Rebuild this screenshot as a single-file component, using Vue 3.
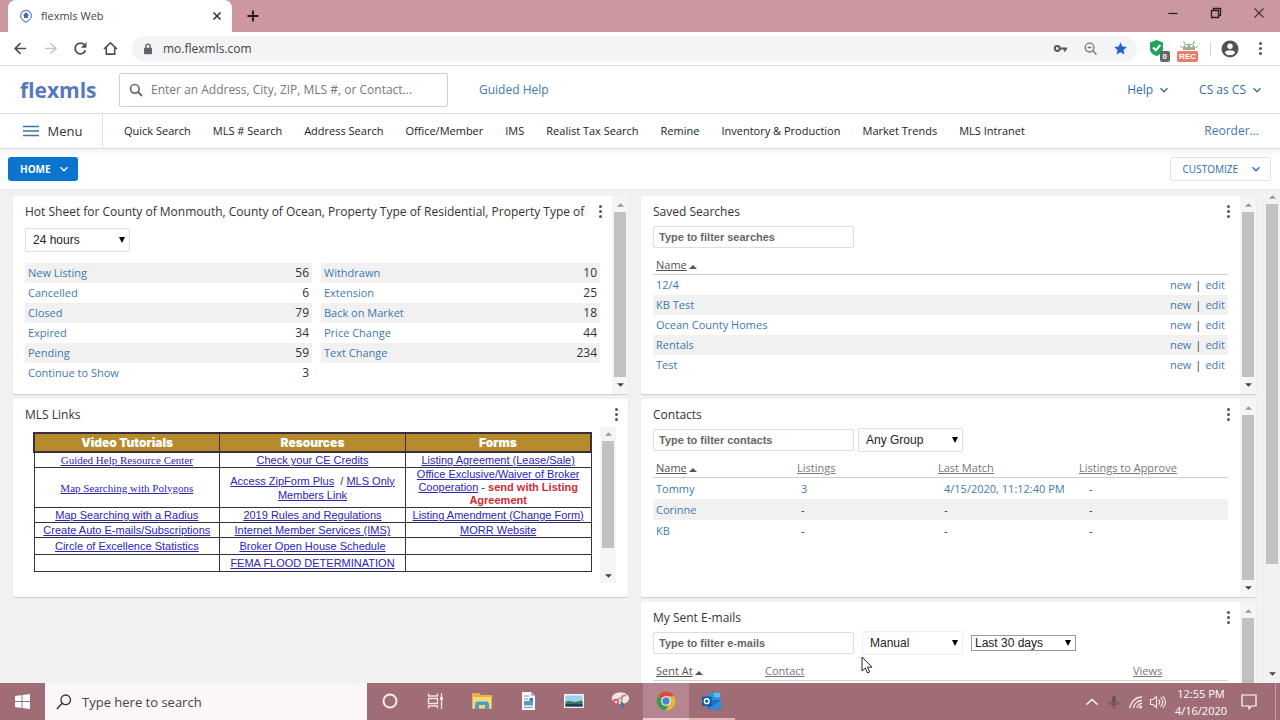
<script setup>
import { ref } from 'vue'

const navItems = [
  'Quick Search', 'MLS # Search', 'Address Search', 'Office/Member', 'IMS',
  'Realist Tax Search', 'Remine', 'Inventory & Production', 'Market Trends', 'MLS Intranet'
]
const hotLeft = [
  ['New Listing', 56], ['Cancelled', 6], ['Closed', 79],
  ['Expired', 34], ['Pending', 59], ['Continue to Show', 3]
]
const hotRight = [
  ['Withdrawn', 10], ['Extension', 25], ['Back on Market', 18],
  ['Price Change', 44], ['Text Change', 234]
]
const searches = ['12/4', 'KB Test', 'Ocean County Homes', 'Rentals', 'Test']
const contacts = [
  { name: 'Tommy', listings: '3', match: '4/15/2020, 11:12:40 PM' },
  { name: 'Corinne' },
  { name: 'KB' }
]
const address = ref('mo.flexmls.com')
</script>

<template>
  <div class="screen">
    <header class="titlebar">
      <div class="tab">
        <svg class="favicon" viewBox="0 0 14 14" aria-hidden="true">
          <path d="M7 13.4 4.6 11.6A5.4 5.4 0 1 1 9.4 11.6Z" fill="#fff" stroke="#6d86c0" stroke-width="1.2" />
          <path d="M7 3.2 3.8 6.4h1.3v2.7h3.8V6.4h1.3Z" fill="#3e64ad" />
        </svg>
        <span class="tab-title">flexmls Web</span>
        <button class="tab-close" aria-label="Close tab">
          <svg viewBox="0 0 10 10"><path d="M1.5 1.5l7 7M8.5 1.5l-7 7" stroke="#333" stroke-width="1.6" /></svg>
        </button>
      </div>
      <button class="new-tab" aria-label="New tab">
        <svg viewBox="0 0 12 12"><path d="M6 .5v11M.5 6h11" stroke="#2a1418" stroke-width="1.8" /></svg>
      </button>
      <div class="window-buttons">
        <button aria-label="Minimize"><svg viewBox="0 0 12 12"><path d="M1.500 6.500h9" stroke="#221" stroke-width="1.200" /></svg></button>
        <button aria-label="Restore"><svg viewBox="0 0 12 12"><path d="M1.500 3.500h7v7h-7zM3.500 3.500v-2h7v7h-2" fill="none" stroke="#221" stroke-width="1.300" /></svg></button>
        <button aria-label="Close"><svg viewBox="0 0 12 12"><path d="M1.500 1.500l9 9M10.500 1.500l-9 9" stroke="#433" stroke-width="1.200" /></svg></button>
      </div>
    </header>

    <div class="toolbar">
      <button class="tool" aria-label="Back"><svg viewBox="0 0 16 16"><path d="M14 8H2.500M8 2.300 2.300 8 8 13.700" fill="none" stroke="#4d4f52" stroke-width="1.800" /></svg></button>
      <button class="tool" aria-label="Forward"><svg viewBox="0 0 16 16"><path d="M2 8h11.500M8 2.300 13.700 8 8 13.700" fill="none" stroke="#c3c4c6" stroke-width="1.600" /></svg></button>
      <button class="tool" aria-label="Reload"><svg viewBox="0 0 16 16"><path d="M13.300 10A5.700 5.700 0 1 1 12 4" fill="none" stroke="#4d4f52" stroke-width="1.900" /><path d="M14.300 1.200v5.900H8.400Z" fill="#4d4f52" /></svg></button>
      <button class="tool" aria-label="Home"><svg viewBox="0 0 16 16"><path d="M1 8.500 8 2l7 6.500M3.500 7v7h9V7" fill="none" stroke="#4d4f52" stroke-width="1.700" /></svg></button>
      <div class="omnibox">
        <svg class="lock" viewBox="0 0 10 12" aria-hidden="true"><path d="M2.800 5V3.300a2.200 2.200 0 0 1 4.400 0V5" fill="none" stroke="#5f6368" stroke-width="1.300" /><rect x="1" y="4.800" width="8" height="6.500" rx="1" fill="#5f6368" /></svg>
        <input v-model="address" class="address" aria-label="Address bar" />
        <button class="tool" aria-label="Saved passwords"><svg viewBox="0 0 16 16"><circle cx="4.500" cy="8" r="2.600" fill="none" stroke="#55585c" stroke-width="2.200" /><path d="M7.500 7h7.500v2h-1.200v2.300h-2.300V9h-4Z" fill="#55585c" /></svg></button>
        <button class="tool" aria-label="Zoom"><svg viewBox="0 0 16 16"><circle cx="7" cy="7" r="4.700" fill="none" stroke="#77797c" stroke-width="1.400" /><path d="M10.500 10.500 14.300 14.300M4.800 7h4.400" stroke="#77797c" stroke-width="1.600" /></svg></button>
        <button class="tool" aria-label="Bookmark"><svg viewBox="0 0 16 16"><path d="m8 1.300 2 4.600 4.900.4-3.700 3.300 1.100 4.900L8 11.900l-4.300 2.600 1.100-4.900L1.100 6.300 6 5.900Z" fill="#2463d6" /></svg></button>
      </div>
      <button class="tool ext" aria-label="Security extension">
        <svg viewBox="0 0 24 20"><path d="M3 3.500 9.500 1 16 3.500v6c0 4-2.500 6-6.500 7.500C5.500 15.500 3 13.500 3 9.500Z" fill="#1fa45a" /><path d="m6 8.500 2.800 2.700L13.300 6" fill="none" stroke="#fff" stroke-width="2" /></svg>
        <span class="badge">0</span>
      </button>
      <button class="tool ext" aria-label="Recorder extension">
        <svg viewBox="0 0 24 20"><path d="M6 11V7.500L8.500 5h7L18 7.500V11Z" fill="#93b18f" /><path d="M8 5 6.500 2M16 5l1.500-3M5 9 3.500 7M19 9l1.500-2" stroke="#7f9d80" /><circle cx="9.500" cy="7" r="1.300" fill="#fff" /><circle cx="14.500" cy="7" r="1.300" fill="#fff" /></svg>
        <span class="badge rec">REC</span>
      </button>
      <span class="tool-sep"></span>
      <button class="tool" aria-label="Profile"><svg class="avatar" viewBox="0 0 18 18"><circle cx="9" cy="9" r="8.500" fill="#505257" /><circle cx="9" cy="6.300" r="2.700" fill="#fff" /><path d="M3.800 12.700c1.200-3.200 9.200-3.200 10.400 0a6.500 6.500 0 0 1-10.400 0Z" fill="#fff" /></svg></button>
      <button class="tool" aria-label="Browser menu"><span class="dots"><i></i><i></i><i></i></span></button>
    </div>

    <div class="brandbar">
      <a href="#" class="logo">flexmls</a>
      <div class="search">
        <svg viewBox="0 0 14 14" aria-hidden="true"><circle cx="5.800" cy="5.800" r="4.300" fill="none" stroke="#6b6b6b" stroke-width="1.700" /><path d="m9 9 4 4" stroke="#6b6b6b" stroke-width="2" /></svg>
        <input type="text" aria-label="Search" placeholder="Enter an Address, City, ZIP, MLS #, or Contact..." />
      </div>
      <a href="#" class="guided">Guided Help</a>
      <button class="link-menu">Help <svg viewBox="0 0 10 10"><path d="m1.500 3.200 3.500 3.600 3.500-3.600" /></svg></button>
      <button class="link-menu last">CS as CS <svg viewBox="0 0 10 10"><path d="m1.500 3.200 3.500 3.600 3.500-3.600" /></svg></button>
    </div>

    <nav class="navbar">
      <button class="menu"><svg viewBox="0 0 16 12" aria-hidden="true"><path d="M0 1.500h16M0 6h16M0 10.500h16" stroke="#3d7394" stroke-width="1.600" /></svg>Menu</button>
      <div class="nav-items"><a v-for="item in navItems" :key="item" href="#">{{ item }}</a></div>
      <a href="#" class="reorder">Reorder...</a>
    </nav>

    <div class="actions">
      <button class="home">HOME <svg viewBox="0 0 10 10"><path d="m1.500 3.200 3.500 3.600 3.500-3.600" /></svg></button>
      <button class="customize">CUSTOMIZE <svg viewBox="0 0 10 10"><path d="m1.500 3.200 3.500 3.600 3.500-3.600" /></svg></button>
    </div>

    <div class="viewport">
      <main class="dashboard">
        <div class="column">
          <section class="card">
            <div class="body">
              <div class="head"><h2>Hot Sheet for County of Monmouth, County of Ocean, Property Type of Residential, Property Type of</h2>
                <button class="dots" aria-label="Hot sheet options"><i></i><i></i><i></i></button></div>
              <div class="filters hot-filter">
                <span class="pick"><select aria-label="Time range"><option>24 hours</option></select><svg viewBox="0 0 6 6"><path d="M0 0h6L3 6Z" /></svg></span>
              </div>
              <div class="hot">
                <table><tbody><tr v-for="row in hotLeft" :key="row[0]"><td><a href="#">{{ row[0] }}</a></td><td class="num">{{ row[1] }}</td></tr></tbody></table>
                <table><tbody><tr v-for="row in hotRight" :key="row[0]"><td><a href="#">{{ row[0] }}</a></td><td class="num">{{ row[1] }}</td></tr></tbody></table>
              </div>
            </div>
            <div class="scroll"><svg viewBox="0 0 8 4"><path class="dim" d="M0 4h8L4 0Z" /></svg><span class="thumb"></span><svg viewBox="0 0 8 4"><path d="M0 0h8L4 4Z" /></svg></div>
          </section>

          <section class="card">
            <div class="body">
              <div class="head"><h2>MLS Links</h2><button class="dots" aria-label="MLS Links options"><i></i><i></i><i></i></button></div>
              <div class="links-frame">
                <table class="links">
                  <thead><tr><th>Video Tutorials</th><th>Resources</th><th>Forms</th></tr></thead>
                  <tbody>
                    <tr><td class="serif"><a href="#">Guided Help Resource Center</a></td><td><a href="#">Check your CE Credits</a></td><td><a href="#">Listing Agreement (Lease/Sale)</a></td></tr>
                    <tr><td class="serif"><a href="#">Map Searching with Polygons</a></td><td><a href="#">Access ZipForm Plus</a>&nbsp; / <a href="#">MLS Only Members Link</a></td><td class="tight"><a href="#">Office Exclusive/Waiver of Broker Cooperation</a> - <strong>send with Listing Agreement</strong></td></tr>
                    <tr><td><a href="#">Map Searching with a Radius</a></td><td><a href="#">2019 Rules and Regulations</a></td><td><a href="#">Listing Amendment (Change Form)</a></td></tr>
                    <tr><td><a href="#">Create Auto E-mails/Subscriptions</a></td><td><a href="#">Internet Member Services (IMS)</a></td><td><a href="#">MORR Website</a></td></tr>
                    <tr class="tall"><td><a href="#">Circle of Excellence Statistics</a></td><td><a href="#">Broker Open House Schedule</a></td><td></td></tr>
                    <tr class="tall"><td></td><td><a href="#">FEMA FLOOD DETERMINATION</a></td><td></td></tr>
                  </tbody>
                </table>
                <div class="scroll inner"><svg viewBox="0 0 8 4"><path class="dim" d="M0 4h8L4 0Z" /></svg><span class="track"><span class="thumb"></span></span><svg viewBox="0 0 8 4"><path d="M0 0h8L4 4Z" /></svg></div>
              </div>
            </div>
          </section>
        </div>

        <div class="column">
          <section class="card">
            <div class="body">
              <div class="head"><h2>Saved Searches</h2><button class="dots" aria-label="Saved Searches options"><i></i><i></i><i></i></button></div>
              <div class="filters"><input type="text" aria-label="Filter searches" placeholder="Type to filter searches" /></div>
              <table class="list saved">
                <thead><tr><th><a href="#" class="sorted">Name</a><svg viewBox="0 0 8 4"><path d="M0 4h8L4 0Z" /></svg></th><th></th></tr></thead>
                <tbody><tr v-for="s in searches" :key="s"><td><a href="#">{{ s }}</a></td><td class="row-actions"><a href="#">new</a><span>|</span><a href="#">edit</a></td></tr></tbody>
              </table>
            </div>
            <div class="scroll"><svg viewBox="0 0 8 4"><path class="dim" d="M0 4h8L4 0Z" /></svg><span class="thumb"></span><svg viewBox="0 0 8 4"><path d="M0 0h8L4 4Z" /></svg></div>
          </section>

          <section class="card">
            <div class="body">
              <div class="head"><h2>Contacts</h2><button class="dots" aria-label="Contacts options"><i></i><i></i><i></i></button></div>
              <div class="filters">
                <input type="text" aria-label="Filter contacts" placeholder="Type to filter contacts" />
                <span class="pick group"><select aria-label="Group"><option>Any Group</option></select><svg viewBox="0 0 6 6"><path d="M0 0h6L3 6Z" /></svg></span>
              </div>
              <table class="list contacts">
                <thead><tr><th><a href="#" class="sorted">Name</a><svg viewBox="0 0 8 4"><path d="M0 4h8L4 0Z" /></svg></th><th><a href="#">Listings</a></th><th><a href="#">Last Match</a></th><th><a href="#">Listings to Approve</a></th></tr></thead>
                <tbody>
                  <tr v-for="c in contacts" :key="c.name">
                    <td><a href="#">{{ c.name }}</a></td>
                    <td><a v-if="c.listings" href="#">{{ c.listings }}</a><template v-else>-</template></td>
                    <td><a v-if="c.match" href="#">{{ c.match }}</a><template v-else>-</template></td>
                    <td>-</td>
                  </tr>
                </tbody>
              </table>
            </div>
            <div class="scroll"><svg viewBox="0 0 8 4"><path class="dim" d="M0 4h8L4 0Z" /></svg><span class="thumb"></span><svg viewBox="0 0 8 4"><path d="M0 0h8L4 4Z" /></svg></div>
          </section>

          <section class="card">
            <div class="body">
              <div class="head"><h2>My Sent E-mails</h2><button class="dots" aria-label="My Sent E-mails options"><i></i><i></i><i></i></button></div>
              <div class="filters">
                <input type="text" aria-label="Filter e-mails" placeholder="Type to filter e-mails" />
                <span class="pick manual"><select aria-label="E-mail type"><option>Manual</option></select><svg viewBox="0 0 6 6"><path d="M0 0h6L3 6Z" /></svg></span>
                <span class="pick plain"><select aria-label="Period"><option>Last 30 days</option></select><svg viewBox="0 0 6 6"><path d="M0 0h6L3 6Z" /></svg></span>
              </div>
              <table class="list emails">
                <thead><tr><th><a href="#" class="sorted">Sent At</a><svg viewBox="0 0 8 4"><path d="M0 4h8L4 0Z" /></svg></th><th><a href="#">Contact</a></th><th><a href="#">Views</a></th></tr></thead>
              </table>
            </div>
            <div class="scroll"><svg viewBox="0 0 8 4"><path class="dim" d="M0 4h8L4 0Z" /></svg><span class="thumb"></span><svg viewBox="0 0 8 4"><path d="M0 0h8L4 4Z" /></svg></div>
          </section>
        </div>
      </main>
      <div class="scroll page"><svg viewBox="0 0 8 4"><path class="dim" d="M0 4h8L4 0Z" /></svg><span class="track"><span class="thumb"></span></span><svg viewBox="0 0 8 4"><path d="M0 0h8L4 4Z" /></svg></div>
    </div>

    <footer class="taskbar">
      <button class="start" aria-label="Start"><svg viewBox="0 0 16 16"><path d="M0 2.200 7 1.200v6.300H0ZM8 1l8-1v7.500H8ZM0 8.500h7v6.300l-7-1ZM8 8.500h8V16l-8-1Z" fill="#fff" /></svg></button>
      <div class="task-search">
        <svg viewBox="0 0 16 16" aria-hidden="true"><circle cx="9.700" cy="5.800" r="4.800" fill="none" stroke="#333" stroke-width="1.300" /><path d="M6.200 9.300.8 15" stroke="#333" stroke-width="1.400" /></svg>
        <input type="text" aria-label="Type here to search" placeholder="Type here to search" />
      </div>
      <button class="task" aria-label="Cortana"><svg viewBox="0 0 20 20"><circle cx="10" cy="10" r="6.500" fill="none" stroke="#f9eef0" stroke-width="2" /></svg></button>
      <button class="task" aria-label="Task View"><svg viewBox="0 0 20 20"><path d="M2.500 2.500V5h9V2.500M2.500 7.500h9v5h-9zM2.500 17.500V15h9v2.500M15.500 2v16" fill="none" stroke="#f3e2e5" stroke-width="1.300" /><path d="M14 6h3v3h-3z" fill="#f3e2e5" /></svg></button>
      <button class="task" aria-label="File Explorer"><svg viewBox="0 0 20 20"><path d="M0 2h7l2 2h11v14H0Z" fill="#e5b347" /><path d="M1 6h18v11H1Z" fill="#f8d775" /><path d="M3 18v-5.500L5 10.500h10l2 2V18h-4v-4H7v4Z" fill="#4c9ecb" /></svg></button>
      <button class="task" aria-label="Document"><svg viewBox="0 0 20 20"><path d="M4 1h9l4 4v14H4Z" fill="#f6fafc" /><path d="M13 1v4h4Z" fill="#a7c3d6" /><path d="M6 5h5M6 8h4M6 16.500h9" stroke="#8198ab" /><path d="M6 10h9v4.500H6Z" fill="#5c9bc0" /><path d="M11.500 7h3.500v3h-3.500Z" fill="#4375a0" /></svg></button>
      <button class="task" aria-label="Photos"><svg viewBox="0 0 20 20"><path d="M0 3h20v14H0Z" fill="#eef4f6" /><path d="M1.500 4.500h17v11h-17Z" fill="#9fd0ea" /><path d="M1.500 11c4-2 6 0 9 0s5-2 8-1v5.500h-17Z" fill="#3f7568" /><path d="M1.500 13h17v2.500h-17Z" fill="#213f50" /></svg></button>
      <button class="task" aria-label="Snipping Tool"><svg viewBox="0 0 22 20"><ellipse cx="11.500" cy="7" rx="9.500" ry="6.500" fill="#f3e6e6" /><path d="m5 10 13-7M14 3l-2 11" stroke="#b6868d" stroke-width="1.500" /><circle cx="6.500" cy="11" r="2.500" fill="none" stroke="#d75662" stroke-width="1.800" /><path d="M12 10.500c4 1 4 4 2.500 7.500l-3-3Z" fill="#3b7ca8" /></svg></button>
      <button class="task active" aria-label="Chrome"><svg viewBox="0 0 20 20"><circle cx="10" cy="10" r="9.500" fill="#e6b735" /><path d="M10 10 1.800 5.200A9.500 9.500 0 0 1 18.200 5.200H10Z" fill="#d94b3b" /><path d="M1.800 5.200A9.500 9.500 0 0 0 9.500 19.500l4.200-7.400L10 10Z" fill="#3e9852" /><circle cx="10" cy="10" r="4.800" fill="#fff" /><circle cx="10" cy="10" r="3.700" fill="#4a82d8" /></svg></button>
      <button class="task open" aria-label="Outlook"><svg viewBox="0 0 22 20"><path d="M7 1h12v9H7Z" fill="#2a93d5" /><path d="M13 1h7v5h-7Z" fill="#50c0ef" /><path d="M6 9h15v10H6Z" fill="#1a6fc0" /><path d="m6 19 15-10v10Z" fill="#2c8bdb" /><rect y="5" width="10.500" height="10.500" rx="1" fill="#0c5aab" /><circle cx="5.200" cy="10.200" r="2.600" fill="none" stroke="#fff" stroke-width="1.600" /></svg></button>
      <div class="tray">
        <button aria-label="Show hidden icons"><svg viewBox="0 0 16 16"><path d="m2.500 10.500 5.500-5 5.500 5" fill="none" stroke="#fff" stroke-width="1.300" /></svg></button>
        <button aria-label="Microphone"><svg viewBox="0 0 16 16"><rect x="6" y="2" width="4" height="8" rx="2" fill="#69505a" /><path d="M4 7.500c0 4.500 8 4.500 8 0M8 11v3.500" fill="none" stroke="#69505a" stroke-width="1.200" /></svg></button>
        <button aria-label="Network"><svg viewBox="0 0 16 16"><path d="M2 14A12 12 0 0 1 14 3M5.500 14A8.500 8.500 0 0 1 14 6.500M9 14a5 5 0 0 1 5-4.500" fill="none" stroke="#f5e7e9" stroke-width="1.300" /><circle cx="12.500" cy="13" r="1.500" fill="#f5e7e9" /></svg></button>
        <button aria-label="Volume"><svg viewBox="0 0 16 16"><path d="M.5 5.500H3L6.500 2.500v11L3 10.500H.5ZM8.500 5.500c1.500 1.500 1.500 3.500 0 5M10.500 3.500c3 2.500 3 6.500 0 9M12.700 2c3.600 3.500 3.600 8.500 0 12" fill="none" stroke="#f5e7e9" stroke-width="1.100" /></svg></button>
        <div class="clock"><span>12:55 PM</span><span>4/16/2020</span></div>
        <button class="notes" aria-label="Notifications"><svg viewBox="0 0 16 16"><path d="M1 1h14v11h-4.500L8 14.700V12H1Z" fill="none" stroke="#fff" stroke-width="1.200" /></svg></button>
        <span class="peek"></span>
      </div>
    </footer>

    <svg class="cursor" viewBox="0 0 12 18" aria-hidden="true"><path d="M1 1v14l3.300-3 2.200 5 2.200-1-2.200-4.800H11Z" fill="#fff" stroke="#222" /></svg>
  </div>
</template>

<style>
html, body { margin: 0; overflow: hidden; }
</style>

<style scoped>
* { box-sizing: border-box; }
.screen {
  position: relative;
  display: flex;
  flex-direction: column;
  height: 100vh;
  overflow: hidden;
  background: #fff;
  color: #333;
  font: 12px/20px "Open Sans", "Noto Sans", sans-serif;
}
button { border: 0; padding: 0; background: none; font: inherit; color: inherit; display: flex; align-items: center; justify-content: center; white-space: nowrap; }
input, select { font: inherit; color: inherit; border: 0; padding: 0; min-width: 0; outline: 0; background: transparent; }
a { color: #3f79b0; text-decoration: none; }
svg { display: block; flex: none; }

.titlebar { display: flex; height: 32px; flex: none; background: #cb98a2; padding-left: 8px; }
.tab { display: flex; align-items: center; width: 224px; padding: 0 10px 0 11px; background: #fff; border-radius: 8px 8px 0 0; }
.favicon { width: 14px; height: 14px; }
.tab-title { flex: 1; margin-left: 8px; font-size: 11px; color: #444; }
.tab-close svg { width: 10px; height: 10px; }
.new-tab { width: 42px; }
.new-tab svg, .window-buttons svg { width: 12px; height: 12px; }
.window-buttons { display: flex; margin-left: auto; padding-bottom: 6px; }
.window-buttons button { width: 43px; }

.toolbar { display: flex; align-items: center; height: 34px; flex: none; padding: 0 5px; border-bottom: 1px solid #e1e1e1; }
.tool { width: 30px; height: 26px; flex: none; }
.tool svg { width: 15px; height: 15px; }
.tool .avatar { width: 18px; height: 18px; }
.omnibox { display: flex; align-items: center; flex: 1; height: 26px; margin: 0 7px; padding: 0 2px 0 11px; border-radius: 13px; background: #f3f4f5; }
.lock { width: 10px; height: 12px; }
.address { flex: 1; margin-left: 10px; font-size: 12px; color: #444; }
.ext { position: relative; }
.tool.ext svg { width: 24px; height: 20px; }
.badge { position: absolute; right: 4px; bottom: 0; padding: 0 3px; border-radius: 2px; background: #666; color: #fff; font: bold 8px/11px "Liberation Sans", sans-serif; }
.rec { right: 6px; padding: 0 2px; background: #ea7b66; }
.tool-sep { width: 1px; height: 14px; margin: 0 4px 0 6px; background: #d4d4d4; }
.dots { display: flex; flex-direction: column; gap: 2px; width: 10px; align-items: center; }
.dots i { width: 3px; height: 3px; border-radius: 2px; background: #555; }

.brandbar { display: flex; align-items: center; height: 48px; flex: none; padding: 0 18px 0 20px; border-bottom: 1px solid #e1e1e1; }
.logo { width: 99px; color: #5878be; font: bold 21px/30px "Open Sans", sans-serif; }
.search { display: flex; align-items: center; width: 329px; height: 34px; padding: 0 9px; border: 1px solid #cfcfcf; border-radius: 2px; }
.search svg { width: 14px; height: 14px; }
.search input { flex: 1; margin-left: 8px; }
.search input::placeholder { color: #777; opacity: 1; }
.guided { margin: 0 auto 0 31px; }
.link-menu { gap: 6px; color: #2f6dac; }
.link-menu.last { margin-left: 30px; }
.link-menu svg, .actions svg { width: 10px; height: 10px; }
.link-menu path, .actions path { fill: none; stroke: currentColor; stroke-width: 1.3; }

.navbar { display: flex; align-items: center; height: 35px; flex: none; padding-right: 21px; border-bottom: 1px solid #dcdcdc; }
.menu { width: 103px; height: 34px; padding-left: 3px; gap: 9px; border-right: 1px solid #e0e0e0; font-size: 13px; }
.menu svg { width: 16px; height: 12px; }
.nav-items { display: flex; gap: 22px; margin-left: 21px; white-space: nowrap; font-size: 11px; }
.nav-items a { color: #222; }
.reorder { margin-left: auto; }

.actions { display: flex; justify-content: space-between; align-items: center; height: 41px; flex: none; padding: 0 9px 0 8px; border-bottom: 1px solid #ececec; background: linear-gradient(#f4f4f4, #fff 8px); font-size: 10px; }
.home { height: 24px; padding: 0 9px 0 12px; gap: 8px; border-radius: 3px; background: #0a74cf; color: #fff; font-weight: 700; }
.customize { height: 24px; padding: 0 9px 0 12px; gap: 13px; border: 1px solid #e2e2e2; border-radius: 3px; color: #2f6dac; background: #fff; }

.viewport { display: flex; flex: 1; min-height: 0; overflow: hidden; background: #f1f1f2; }
.dashboard { flex: 1; display: grid; grid-template-columns: 1fr 1fr; gap: 13px; align-items: start; padding: 6px 8px 0 13px; min-width: 0; }
.column { display: flex; flex-direction: column; gap: 5px; min-width: 0; }
.card { display: flex; min-height: 198px; background: #fff; border-radius: 2px; box-shadow: 0 1px 1px #ccc; }
.body { flex: 1; min-width: 0; padding: 6px 12px 11px; }
.head { display: flex; align-items: flex-start; justify-content: space-between; }
.head h2 { margin: 0; font: 12px/20px "Open Sans", sans-serif; white-space: nowrap; }
.head .dots { margin: 3px -5px 0 0; }
.filters { display: flex; align-items: center; gap: 4px; height: 22px; margin: 4px 0 8px; }
.filters input { width: 201px; height: 22px; padding: 0 5px; border: 1px solid #ddd; border-radius: 2px; font: bold 11px/16px "Liberation Sans", sans-serif; }
.filters input::placeholder { color: #666; opacity: 1; }
.hot-filter { height: 24px; margin: 6px 0 11px; }
.pick { display: grid; align-items: center; width: 105px; height: 24px; border: 1px solid #ddd; border-radius: 2px; font: 12px/16px "Liberation Sans", sans-serif; color: #222; }
.pick select { grid-area: 1 / 1; width: 100%; padding-left: 7px; appearance: none; }
.pick svg { grid-area: 1 / 1; justify-self: end; width: 6px; height: 6px; margin-right: 4px; pointer-events: none; }
.manual { width: 101px; margin-left: 4px; border-color: #eee; }
.pick.plain { height: 16px; margin-left: 4px; border-color: #999; border-radius: 0; line-height: 14px; }
.plain select { height: 14px; padding-left: 3px; }

table { border-collapse: collapse; }
.hot { display: grid; grid-template-columns: 287px 1fr; gap: 9px; align-items: start; }
.hot table { width: 100%; }
.hot td { height: 20px; padding: 0 3px; line-height: 20px; }
.hot td a { font-size: 11px; }
.hot tr:nth-child(odd), .list tbody tr:nth-child(even) { background: #f1f1f1; }
td.num { text-align: right; }

.list { width: 100%; table-layout: fixed; font-size: 11px; }
.list th { height: 18px; padding: 0 3px; line-height: 18px; border-bottom: 1px solid #d0d0d0; text-align: left; font-weight: 400; }
.list td { height: 21px; padding: 0 3px; line-height: 21px; }
.saved td { height: 20px; line-height: 20px; }
.list .row-actions { text-align: right; }
.row-actions span { margin: 0 4px; }
.list th a { color: #777; text-decoration: underline; }
.list th .sorted { color: #555; }
.list th svg { display: inline-block; width: 8px; height: 4px; margin-left: 2px; fill: #555; }
.contacts th:nth-child(-n+3) { width: 141px; }
.contacts td:nth-child(2) { padding-left: 7px; }
.contacts td:nth-child(n+3) { padding: 0 0 0 9px; white-space: nowrap; }
.contacts td:nth-child(4) { padding-left: 13px; }
.emails th:nth-child(1) { width: 109px; }
.emails th:nth-child(3) { width: 98px; }

.links-frame { display: flex; justify-content: space-between; margin: 2px 0 0 8px; }
.links { flex: 1; table-layout: fixed; width: 100%; margin: 5px 8px 5px 0; align-self: flex-start; font: 11px/14px "Liberation Sans", sans-serif; text-align: center; }
.links th { height: 19px; padding: 0; border: 1px solid #3a2f3f; background: #b58b2b; color: #fff; font: 900 12px/16px "Inter", sans-serif; }
.links thead { border: 2px solid #3a2f3f; }
.links td { height: 15px; padding: 0 4px; border: 1px solid #34303f; }
.links a { color: #2b25b5; text-decoration: underline; }
.links .tight { line-height: 13px; }
.links .tall td { height: 17px; }
.links strong { color: #d22b35; }
.serif { font-family: "Liberation Serif", serif; }

.scroll { display: flex; flex-direction: column; align-items: center; flex: none; width: 16px; padding: 7px 0; background: #f5f5f5; }
.scroll svg { width: 7px; height: 4px; fill: #444; }
.scroll .dim { fill: #999; }
.scroll .thumb { flex: 1; width: 12px; margin: 5px 0 6px; background: #c1c1c1; }
.scroll .track { display: flex; flex-direction: column; flex: 1; margin: 5px 0 6px; }
.inner { height: 156px; padding: 5px 0; }
.inner .track .thumb { flex: none; height: 84%; margin: 0; }
.page { padding: 5px 0 7px; background: #f1f1f2; }
.page .track .thumb { flex: none; height: 78%; margin: 0; }

.taskbar { display: flex; flex: none; height: 37px; background: #a06c76; color: #fff; }
.start { width: 45px; }
.start svg { width: 15px; height: 15px; }
.task-search { display: flex; align-items: center; width: 322px; padding-left: 11px; background: #fbf6f7; color: #444; }
.task-search svg { width: 16px; height: 16px; }
.task-search input { flex: 1; margin-left: 10px; font-size: 13px; }
.task-search input::placeholder { color: #444; opacity: 1; }
.task { width: 46px; border-bottom: 2px solid transparent; }
.task svg { width: 20px; height: 20px; }
.active { background: #b68690; border-color: #f0cdd2; }
.open { border-color: #e9b3ba; }
.tray { display: flex; align-items: center; margin-left: auto; }
.tray button { width: 22px; height: 37px; }
.tray svg { width: 16px; height: 16px; }
.clock { display: flex; flex-direction: column; width: 60px; margin-left: 2px; text-align: center; font-size: 11px; line-height: 17px; }
.tray .notes { width: 36px; }
.peek { width: 1px; height: 37px; margin: 0 4px 0 8px; background: #c39aa2; }
.cursor { position: absolute; left: 861px; top: 656px; width: 12px; height: 18px; }
</style>
